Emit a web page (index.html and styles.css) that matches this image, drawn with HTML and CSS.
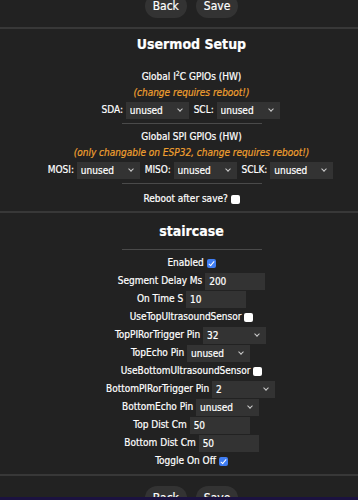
FILE: index.html
```html
<!DOCTYPE html>
<html>
<head>
    <title>Usermod Setup</title>
    <link rel="stylesheet" href="styles.css">
</head>
<body>
    <div class="page">
        <div class="btns top">
            <button>Back</button><button>Save</button>
        </div>
        <hr class="full">

        <div class="sec first">
            <h2>Usermod Setup</h2>
            <div class="line">Global I<sup>2</sup>C GPIOs (HW)</div>
            <div class="line warn">(change requires reboot!)</div>
            <div class="row">
                SDA: <span class="sel"><select><option>unused</option></select></span>
                SCL: <span class="sel"><select><option>unused</option></select></span>
            </div>
            <hr class="sub">
            <div class="line">Global SPI GPIOs (HW)</div>
            <div class="line warn">(only changable on ESP32, change requires reboot!)</div>
            <div class="row">
                MOSI: <span class="sel"><select><option>unused</option></select></span>
                MISO: <span class="sel"><select><option>unused</option></select></span>
                SCLK: <span class="sel"><select><option>unused</option></select></span>
            </div>
            <hr class="sub">
            <div class="row reboot">Reboot after save? <input type="checkbox"></div>
        </div>
        <hr class="full">

        <div class="sec second">
            <h2>staircase</h2>
            <hr class="sub">
            <div class="row">Enabled <input type="checkbox" checked></div>
            <div class="row">Segment Delay Ms <input type="text" value="200"></div>
            <div class="row">On Time S <input type="text" value="10"></div>
            <div class="row">UseTopUltrasoundSensor <input type="checkbox"></div>
            <div class="row">TopPIRorTrigger Pin <span class="sel"><select><option>32</option></select></span></div>
            <div class="row">TopEcho Pin <span class="sel"><select><option>unused</option></select></span></div>
            <div class="row">UseBottomUltrasoundSensor <input type="checkbox"></div>
            <div class="row">BottomPIRorTrigger Pin <span class="sel"><select><option>2</option></select></span></div>
            <div class="row">BottomEcho Pin <span class="sel"><select><option>unused</option></select></span></div>
            <div class="row">Top Dist Cm <input type="text" value="50"></div>
            <div class="row">Bottom Dist Cm <input type="text" value="50"></div>
            <div class="row">Toggle On Off <input type="checkbox" checked></div>
        </div>
        <hr class="full">

        <div class="btns">
            <button>Back</button><button>Save</button>
        </div>
    </div>
    <div class="bar"></div>
</body>
</html>
```

FILE: styles.css
```css
html {
    overflow: hidden;
}
body {
    margin: 0;
    background-color: #222;
    color: #fff;
    font-family: "DejaVu Sans Condensed", "DejaVu Sans", sans-serif;
    font-stretch: condensed;
    font-size: 10px;
    -webkit-text-stroke: 0.2px;
}
.page {
    width: 383px;
    text-align: center;
}
.btns {
    display: flex;
    justify-content: center;
    gap: 9px;
    padding: 10px 0;
}
.btns.top {
    margin-top: -6px;
    padding: 0 0 9px;
}
button {
    background-color: #333;
    color: #fff;
    border: none;
    height: 24px;
    padding: 0 8px;
    border-radius: 12px;
    font-family: inherit;
    font-stretch: condensed;
    font-size: 12px;
    -webkit-text-stroke: 0.2px;
}
hr.full {
    margin: 0;
    border: none;
    height: 2px;
    background-color: #383838;
}
hr.sub {
    width: 140px;
    margin: 5px auto;
    border: none;
    height: 1px;
    background-color: #4a4a4a;
}
h2 {
    margin: 0;
    font-size: 14px;
    line-height: 20px;
}
.first h2 {
    margin: 5px 0 15px;
}
.second h2 {
    margin-top: 8px;
}
.second hr.sub {
    margin: 8px auto 4px;
}
.first .row + hr.sub {
    margin-top: 4px;
}
.line {
    line-height: 16px;
}
sup {
    font-size: 7px;
    line-height: 0;
}
.warn {
    color: #f0a030;
    font-style: italic;
}
.row {
    height: 18px;
    line-height: 18px;
}
.row.reboot {
    margin: 6px 0 3px;
}
.second {
    padding-bottom: 4px;
}
input[type="text"] {
    width: 60px;
    height: 17px;
    box-sizing: border-box;
    padding: 0 4px;
    border: none;
    background-color: #333;
    color: #fff;
    font-family: inherit;
    font-stretch: condensed;
    font-size: 10px;
    -webkit-text-stroke: 0.2px;
    vertical-align: middle;
    outline: none;
}
.sel {
    position: relative;
    display: inline-block;
    vertical-align: middle;
    height: 17px;
    margin-right: 2px;
}
.sel::after {
    content: "";
    position: absolute;
    right: 7px;
    top: 5px;
    width: 3px;
    height: 3px;
    border-right: 1px solid #ccc;
    border-bottom: 1px solid #ccc;
    transform: rotate(45deg);
    pointer-events: none;
}
select {
    appearance: none;
    width: 63px;
    height: 17px;
    padding: 0 4px;
    border: none;
    border-radius: 0;
    background-color: #333;
    color: #fff;
    font-family: inherit;
    font-stretch: condensed;
    font-size: 10px;
    -webkit-text-stroke: 0.2px;
    display: block;
}
input[type="checkbox"] {
    appearance: none;
    position: relative;
    width: 9px;
    height: 9px;
    margin: 0;
    border-radius: 2px;
    background-color: #fff;
    vertical-align: middle;
}
input[type="checkbox"]:checked {
    background-color: #3f7df3;
}
input[type="checkbox"]:checked::after {
    content: "";
    position: absolute;
    left: 3px;
    top: 1px;
    width: 2px;
    height: 5px;
    border-right: 1.5px solid #fff;
    border-bottom: 1.5px solid #fff;
    transform: rotate(40deg);
}
.bar {
    position: fixed;
    left: 0;
    right: 0;
    bottom: 0;
    height: 3px;
    background-color: #1b1240;
}
```
